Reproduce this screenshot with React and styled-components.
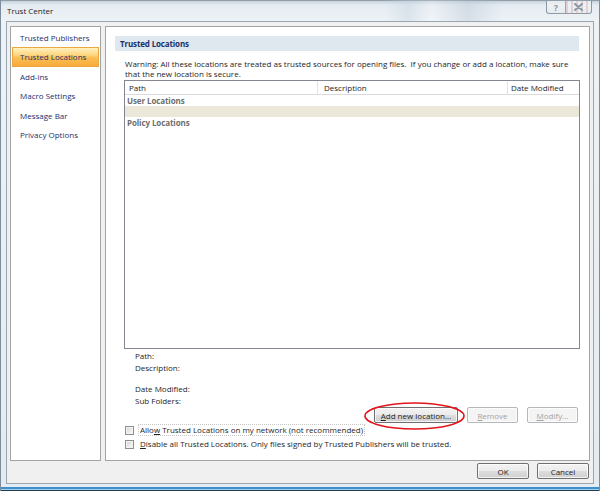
import React from 'react'
import styled, { createGlobalStyle } from 'styled-components'

const FONT = `"Open Sans", "Noto Sans", "DejaVu Sans", sans-serif`

const GlobalStyle = createGlobalStyle`
  html, body { margin: 0; padding: 0; background: #ffffff; }
  body { font-family: ${FONT}; }
  * { box-sizing: border-box; }
`

const Window = styled.div`
  width: 600px;
  height: 491px;
  display: flex;
  flex-direction: column;
  font-family: ${FONT};
  font-size: 8px;
  color: #1e1e1e;
  background:
    linear-gradient(0deg, #22384c 0 1px, #9fd2f0 1px 2px, #3f8fcb 2px 4px, #e4edf4 4px 7px, rgba(255,255,255,0) 7px),
    linear-gradient(180deg, #5c6a78 0, #c6d2dc 1px, #e5ecf2 5px, #edf2f6 20px, #e3ebf1 100%);
  border-left: 1px solid #7d8d9c;
  border-right: 1px solid #7d8d9c;
`

const TitleBar = styled.div`
  flex: none;
  height: 21px;
  display: flex;
  align-items: flex-start;
  justify-content: space-between;
  padding-left: 6px;
  background: linear-gradient(90deg, rgba(255,255,255,0) 0 64%, rgba(190,205,220,.35) 68%, rgba(255,255,255,.2) 72%, rgba(175,190,206,.35) 78%, rgba(255,255,255,0) 84%);
`

const Title = styled.span`
  line-height: 21px;
  color: #1c1c1c;
  font-size: 8px;
`

const CaptionGroup = styled.div`
  display: flex;
  margin: 1px 7px 0 0;
  border: 1px solid rgba(92, 104, 118, .65);
  border-top: none;
  border-radius: 0 0 3px 3px;
  overflow: hidden;
  background: linear-gradient(180deg, rgba(255,255,255,.55), rgba(225,232,238,.45));
`

const CaptionButton = styled.div`
  width: ${p => p.w}px;
  height: 12px;
  display: flex;
  align-items: center;
  justify-content: center;
  color: #8a96a2;
  font-weight: 700;
  font-size: 9px;
  & + & { border-left: 1px solid rgba(92, 104, 118, .55); }
  background: ${p => p.close
    ? 'repeating-linear-gradient(90deg, rgba(214,150,150,.35) 0 2px, rgba(255,255,255,0) 2px 5px)'
    : 'transparent'};
`

const Client = styled.div`
  flex: none;
  height: 463px;
  margin: 0 5px;
  border: 1px solid #9aa6b2;
  background: #f0f0f0;
  padding: 4px 3px;
  display: flex;
  flex-direction: column;
`

const Main = styled.div`
  display: flex;
  gap: 4px;
  height: 435px;
`

const Pane = styled.div`
  width: ${p => p.w}px;
  height: 100%;
  background: #ffffff;
  border: 1px solid #a3a3a3;
`

const Nav = styled.div`
  padding: 1px 1px;
  display: flex;
  flex-direction: column;
`

const NavItem = styled.div`
  height: 19.4px;
  line-height: 18px;
  padding-left: 7px;
  color: #1b2f6d;
  border: 1px solid ${p => (p.active ? '#e9a940' : 'transparent')};
  background: ${p => (p.active
    ? 'linear-gradient(180deg, #fff1c2 0%, #fdd57c 40%, #fbbd52 55%, #f9ac3c 100%)'
    : 'transparent')};
  white-space: nowrap;
`

const RightPane = styled(Pane)`
  padding: 9px 10px 0 9px;
  display: flex;
  flex-direction: column;
`

const SectionBar = styled.div`
  height: 15px;
  line-height: 15px;
  padding-left: 5px;
  background: #dfe7ef;
  color: #1b3163;
  font-weight: 700;
  letter-spacing: -0.15px;
`

const Content = styled.div`
  margin: 8px -1px 0 9px;
  display: flex;
  flex-direction: column;
`

const Warning = styled.div`
  line-height: 10px;
  padding-left: 1px;
  white-space: nowrap;
`

const Table = styled.div`
  margin-top: 1px;
  height: 269px;
  border: 1px solid #828790;
  display: flex;
  flex-direction: column;
`

const HeaderRow = styled.div`
  display: grid;
  grid-template-columns: 193px 190px 1fr;
  height: 14px;
  border-bottom: 1px solid #dadada;
`

const HeaderCell = styled.div`
  line-height: 13px;
  padding-left: ${p => p.pad || 4}px;
  border-right: ${p => (p.last ? 'none' : '1px solid #e3e3e3')};
  white-space: nowrap;
`

const GroupRow = styled.div`
  height: 11px;
  line-height: 11px;
  padding-left: 2px;
  color: #6e6e6e;
  font-weight: 700;
  letter-spacing: -0.1px;
  background: ${p => p.bg || 'transparent'};
`

const Details = styled.div`
  margin-top: 1px;
  padding-left: 11px;
  display: flex;
  flex-direction: column;
`

const DetailLine = styled.div`
  line-height: 12px;
  height: 12px;
  margin-top: ${p => p.gap || 0}px;
`

const ButtonRow = styled.div`
  display: flex;
  justify-content: flex-end;
  gap: 9px;
  padding-right: 2px;
`

const Button = styled.div`
  width: ${p => p.w}px;
  height: 16px;
  display: flex;
  align-items: center;
  justify-content: center;
  border: 1px solid ${p => (p.disabled ? '#b4b8bb' : '#707070')};
  border-radius: 2px;
  color: ${p => (p.disabled ? '#a3a3a3' : '#1e1e1e')};
  background: ${p => (p.disabled
    ? '#f4f4f4'
    : 'linear-gradient(180deg, #f3f3f3 0%, #ebebeb 48%, #dddddd 52%, #cfcfcf 100%)')};
  box-shadow: inset 0 0 0 1px rgba(255, 255, 255, .75);
  white-space: nowrap;
`

const Circled = styled.div`
  position: relative;
`

const Ring = styled.svg`
  position: absolute;
  left: -10px;
  top: -5px;
  overflow: visible;
  pointer-events: none;
`

const CheckRow = styled.div`
  height: 14px;
  display: flex;
  align-items: center;
  gap: 4px;
  padding-left: 1px;
  white-space: nowrap;
`

const Box = styled.span`
  width: 9px;
  height: 9px;
  border: 1px solid #8f8f8f;
  background: linear-gradient(135deg, #d2d2d2 0%, #ececec 60%, #f8f8f8 100%);
  box-shadow: inset 0 0 0 1px #f4f4f4;
`

const Label = styled.span`
  padding: 0 1px;
  line-height: 10px;
  border: 1px dotted ${p => (p.focus ? 'rgba(0,0,0,.22)' : 'transparent')};
`

const Footer = styled.div`
  margin-top: 2px;
  display: flex;
  justify-content: flex-end;
  gap: 8px;
  padding-right: 1px;
`

const navItems = [
  'Trusted Publishers',
  'Trusted Locations',
  'Add-ins',
  'Macro Settings',
  'Message Bar',
  'Privacy Options',
]

export default function App() {
  return (
    <>
      <GlobalStyle />
      <Window>
        <TitleBar>
          <Title>Trust Center</Title>
          <CaptionGroup>
            <CaptionButton w={18}>?</CaptionButton>
            <CaptionButton w={26} close>
              <svg width="9" height="8" viewBox="0 0 9 8">
                <path d="M1 1 L8 7 M8 1 L1 7" stroke="#8a96a2" strokeWidth="2" strokeLinecap="round" />
              </svg>
            </CaptionButton>
          </CaptionGroup>
        </TitleBar>

        <Client>
          <Main>
            <Pane w={91}>
              <Nav>
                {navItems.map(item => (
                  <NavItem key={item} active={item === 'Trusted Locations'}>{item}</NavItem>
                ))}
              </Nav>
            </Pane>

            <RightPane w={485}>
              <SectionBar>Trusted Locations</SectionBar>
              <Content>
                <Warning>
                  Warning: All these locations are treated as trusted sources for opening files.&nbsp; If you change or add a location, make sure
                  <br />
                  that the new location is secure.
                </Warning>

                <Table>
                  <HeaderRow>
                    <HeaderCell>Path</HeaderCell>
                    <HeaderCell pad={6}>Description</HeaderCell>
                    <HeaderCell last pad={3}>Date Modified</HeaderCell>
                  </HeaderRow>
                  <GroupRow>User Locations</GroupRow>
                  <GroupRow bg="#ebe8d9" />
                  <GroupRow>Policy Locations</GroupRow>
                </Table>

                <Details>
                  <DetailLine>Path:</DetailLine>
                  <DetailLine>Description:</DetailLine>
                  <DetailLine gap={9}>Date Modified:</DetailLine>
                  <DetailLine>Sub Folders:</DetailLine>
                </Details>

                <ButtonRow>
                  <Circled>
                    <Button w={84}><u>A</u>dd new location...</Button>
                    <Ring width="101" height="28">
                      <ellipse cx="50.5" cy="14" rx="49.5" ry="13" fill="none" stroke="#e3151c" strokeWidth="1.6" />
                    </Ring>
                  </Circled>
                  <Button w={51} disabled><u>R</u>emove</Button>
                  <Button w={51} disabled><u>M</u>odify...</Button>
                </ButtonRow>

                <CheckRow>
                  <Box />
                  <Label focus>Allo<u>w</u> Trusted Locations on my network (not recommended)</Label>
                </CheckRow>
                <CheckRow>
                  <Box />
                  <Label><u>D</u>isable all Trusted Locations. Only files signed by Trusted Publishers will be trusted.</Label>
                </CheckRow>
              </Content>
            </RightPane>
          </Main>

          <Footer>
            <Button w={52}>OK</Button>
            <Button w={52}>Cancel</Button>
          </Footer>
        </Client>
      </Window>
    </>
  )
}
